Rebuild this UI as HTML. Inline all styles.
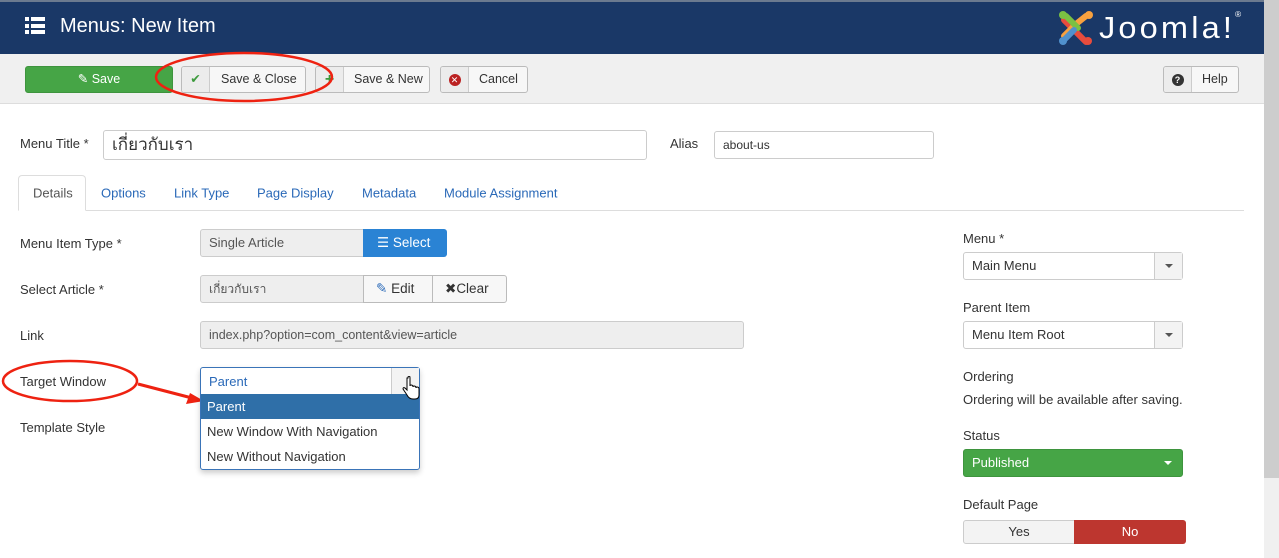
<!DOCTYPE html>
<html><head><meta charset="utf-8"><style>
*{box-sizing:border-box;margin:0;padding:0}
body{width:1279px;height:558px;overflow:hidden;background:#fff;font-family:"Liberation Sans","DejaVu Sans",sans-serif;font-size:13px;color:#333;position:relative}
.abs{position:absolute}
.hdr{left:0;top:0;width:1264px;height:54px;background:#1a3867;border-top:2px solid #6b7a8f}
.tb{left:0;top:54px;width:1264px;height:50px;background:#f0f0f0;border-bottom:1px solid #ddd}
.btn{position:absolute;height:27px;border:1px solid #bbb;border-radius:3px;background:#f7f7f7;font-size:12.5px;line-height:25px;color:#333;overflow:hidden}
.btn .ic{position:absolute;left:0;top:0;bottom:0;width:28px;border-right:1px solid #ccc;background:#ececec;text-align:center}
.lbl{position:absolute;font-size:13px;color:#333}
.inp{position:absolute;border:1px solid #ccc;border-radius:3px;background:#fff;font-size:13px;padding-left:8px}
.tab{position:absolute;top:193px;font-size:13px;color:#2a69b8;transform:translateY(-50%)}
.sel{position:absolute;border:1px solid #ccc;border-radius:3px;background:#fff;height:28px;line-height:26px;padding-left:8px;font-size:13px}
.sel .dd{position:absolute;right:0;top:0;bottom:0;width:28px;border-left:1px solid #ccc;background:#f3f3f3}
.car{position:absolute;left:10px;top:11px;border-left:4px solid transparent;border-right:4px solid transparent;border-top:4px solid #555}
</style></head><body>
<div class="abs hdr"></div>
<div class="abs" style="left:25px;top:17px;width:20px;height:17px">
<div style="position:absolute;left:0;top:0;width:4px;height:4px;background:#fff"></div><div style="position:absolute;left:6px;top:0;width:14px;height:4px;background:#fff"></div>
<div style="position:absolute;left:0;top:6.5px;width:4px;height:4px;background:#fff"></div><div style="position:absolute;left:6px;top:6.5px;width:14px;height:4px;background:#fff"></div>
<div style="position:absolute;left:0;top:13px;width:4px;height:4px;background:#fff"></div><div style="position:absolute;left:6px;top:13px;width:14px;height:4px;background:#fff"></div></div>
<div class="abs" style="left:60px;top:15px;color:#fff;font-size:20px">Menus: New Item</div>
<svg class="abs" style="left:1056px;top:8px" width="40" height="40" viewBox="0 0 40 40">
<path d="M8 12 L20 24 M20 24 L30 34" stroke="#e84c3d" stroke-width="6" stroke-linecap="round"/>
<path d="M8 28 L20 16 L30 8" stroke="#f8a13f" stroke-width="6" stroke-linecap="round" fill="none"/>
<path d="M10 8 L22 20" stroke="#7ac143" stroke-width="6" stroke-linecap="round"/>
<path d="M8 32 L18 22" stroke="#5091cd" stroke-width="6" stroke-linecap="round"/>
<circle cx="7" cy="7" r="4" fill="#7ac143"/><circle cx="33" cy="7" r="4" fill="#f8a13f"/><circle cx="7" cy="33" r="4" fill="#5091cd"/><circle cx="32" cy="33" r="4" fill="#e84c3d"/></svg>
<div class="abs" style="left:1099px;top:10px;color:#fff;font-size:31px;letter-spacing:3px;transform:scaleX(1.05);transform-origin:left">Joomla!<span style="font-size:8px;vertical-align:top;letter-spacing:0">®</span></div>
<div class="abs" style="left:1264px;top:0;width:15px;height:478px;background:#cdcdcd"></div>
<div class="abs" style="left:1264px;top:478px;width:15px;height:80px;background:#f0f0f0"></div>
<div class="abs tb"></div>
<div class="btn" style="left:25px;top:66px;width:148px;background:#46a546;border-color:#3e943e;color:#fff;text-align:center">&#9998; Save</div>
<div class="btn" style="left:181px;top:66px;width:125px"><span class="ic" style="color:#3c9a3c">&#10004;</span><span style="position:absolute;left:39px">Save &amp; Close</span></div>
<div class="btn" style="left:315px;top:66px;width:115px"><span class="ic" style="color:#3c9a3c;font-weight:bold;font-size:16px">+</span><span style="position:absolute;left:38px">Save &amp; New</span></div>
<div class="btn" style="left:440px;top:66px;width:88px"><span class="ic"><span style="display:inline-block;width:12px;height:12px;border-radius:50%;background:#b22;color:#fff;font-size:9px;line-height:12px;margin-top:6px">✕</span></span><span style="position:absolute;left:38px">Cancel</span></div>
<div class="btn" style="left:1163px;top:66px;width:76px"><span class="ic"><span style="display:inline-block;width:12px;height:12px;border-radius:50%;background:#333;color:#fff;font-size:9px;line-height:12px;margin-top:6px;font-weight:bold">?</span></span><span style="position:absolute;left:38px">Help</span></div>
<svg class="abs" style="left:150px;top:48px" width="190" height="56"><ellipse cx="94" cy="29" rx="88" ry="24" fill="none" stroke="#e21" stroke-width="2.5"/></svg>

<div class="lbl" style="left:20px;top:136px">Menu Title *</div>
<div class="inp" style="left:103px;top:130px;width:544px;height:30px;line-height:28px;font-size:17px">เกี่ยวกับเรา</div>
<div class="lbl" style="left:670px;top:136px">Alias</div>
<div class="inp" style="left:714px;top:131px;width:220px;height:28px;line-height:26px;font-size:12px">about-us</div>

<div class="abs" style="left:18px;top:210px;width:1226px;height:1px;background:#ddd"></div>
<div class="abs" style="left:18px;top:175px;width:68px;height:36px;border:1px solid #ddd;border-bottom-color:#fff;border-radius:4px 4px 0 0;background:#fff"></div>
<div class="tab" style="left:33px;color:#555">Details</div>
<div class="tab" style="left:101px">Options</div>
<div class="tab" style="left:174px">Link Type</div>
<div class="tab" style="left:257px">Page Display</div>
<div class="tab" style="left:362px">Metadata</div>
<div class="tab" style="left:444px">Module Assignment</div>

<div class="lbl" style="left:20px;top:236px">Menu Item Type *</div>
<div class="inp" style="left:200px;top:229px;width:170px;height:28px;line-height:26px;background:#eee;color:#555">Single Article</div>
<div class="abs" style="left:363px;top:229px;width:84px;height:28px;background:#2a83d4;border-radius:0 3px 3px 0;color:#fff;line-height:28px;padding-left:14px;font-size:13.5px">☰ Select</div>
<div class="lbl" style="left:20px;top:282px">Select Article *</div>
<div class="inp" style="left:200px;top:275px;width:170px;height:28px;line-height:26px;background:#eee;color:#555;font-size:12px">เกี่ยวกับเรา</div>
<div class="btn" style="left:363px;top:275px;width:70px;height:28px;line-height:26px;border-radius:0;padding-left:12px;font-size:13.5px"><span style="color:#2a69b8">&#9998;</span> Edit</div>
<div class="btn" style="left:432px;top:275px;width:75px;height:28px;line-height:26px;border-radius:0 3px 3px 0;padding-left:12px;font-size:13.5px"><b>✖</b>Clear</div>
<div class="lbl" style="left:20px;top:328px">Link</div>
<div class="inp" style="left:200px;top:321px;width:544px;height:28px;line-height:26px;background:#eee;color:#555;font-size:12.5px">index.php?option=com_content&amp;view=article</div>

<div class="lbl" style="left:20px;top:374px">Target Window</div>
<div class="lbl" style="left:20px;top:420px">Template Style</div>
<svg class="abs" style="left:0;top:358px" width="210" height="60"><ellipse cx="70" cy="23" rx="67" ry="20" fill="none" stroke="#e21" stroke-width="2.5"/><path d="M138 26 L192 40" stroke="#e21" stroke-width="3"/><path d="M204 43 L186 46 L190 35 Z" fill="#e21"/></svg>
<div class="abs" style="left:200px;top:367px;width:220px;height:103px;border:1px solid #3a74b8;border-radius:3px;background:#fff;box-shadow:0 3px 6px rgba(0,0,0,.2)"></div>
<div class="abs" style="left:209px;top:374px;color:#2a69b8">Parent</div>
<div class="abs" style="left:391px;top:368px;width:28px;height:26px;background:#f3f3f3;border-left:1px solid #ccc"></div>
<div class="abs" style="left:201px;top:394px;width:218px;height:25px;background:#2f6fa8;color:#fff;padding-left:6px;line-height:25px">Parent</div>
<div class="abs" style="left:207px;top:424px;color:#333">New Window With Navigation</div>
<div class="abs" style="left:207px;top:449px;color:#333">New Without Navigation</div>
<svg class="abs" style="left:401px;top:376px" width="20" height="26"><path d="M6 2 v12 l-2 -2 q-2 -1 -2 1 l4 6 q2 4 6 4 h2 q4 0 4 -4 v-6 q0 -2 -2 -2 q-1 0 -1 1 q0 -2 -2 -2 q-1 0 -1 1 q0 -2 -2 -2 q-1 0 -1 1 v-8 q0 -2 -1 -2 q-1 0 -1 2z" fill="#fff" stroke="#000" stroke-width="1"/></svg>

<div class="lbl" style="left:963px;top:231px">Menu *</div>
<div class="sel" style="left:963px;top:252px;width:220px">Main Menu<span class="dd"><span class="car"></span></span></div>
<div class="lbl" style="left:963px;top:300px">Parent Item</div>
<div class="sel" style="left:963px;top:321px;width:220px">Menu Item Root<span class="dd"><span class="car"></span></span></div>
<div class="lbl" style="left:963px;top:369px">Ordering</div>
<div class="lbl" style="left:963px;top:392px">Ordering will be available after saving.</div>
<div class="lbl" style="left:963px;top:428px">Status</div>
<div class="sel" style="left:963px;top:449px;width:220px;background:#46a546;border-color:#3e943e;color:#fff">Published<span class="car" style="left:auto;right:10px;border-top-color:#fff"></span></div>
<div class="lbl" style="left:963px;top:497px">Default Page</div>
<div class="abs" style="left:963px;top:520px;width:112px;height:24px;border:1px solid #ccc;border-radius:3px 0 0 3px;background:#f3f3f3;text-align:center;line-height:22px">Yes</div>
<div class="abs" style="left:1074px;top:520px;width:112px;height:24px;background:#bd362f;border-radius:0 3px 3px 0;color:#fff;text-align:center;line-height:24px">No</div>
</body></html>
